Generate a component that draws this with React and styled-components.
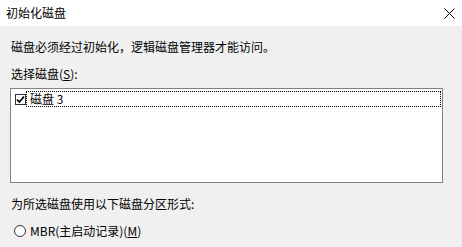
import styled, { createGlobalStyle } from 'styled-components'

const GlobalStyle = createGlobalStyle`
  html, body {
    margin: 0;
    padding: 0;
    background: #f0f0f0;
  }
  body {
    font-family: "Noto Sans CJK SC", "Noto Sans", sans-serif;
    font-size: 12px;
    color: #000;
  }
`

const App = () => {
  return (
    <>
      <GlobalStyle />
      <Dialog>
        <TitleBar>
          <Title>初始化磁盘</Title>
          <CloseButton>
            <svg width="11" height="11" viewBox="0 0 11 11">
              <path d="M0.5 0.5 L10.5 10.5 M10.5 0.5 L0.5 10.5" stroke="#000" strokeWidth="1" />
            </svg>
          </CloseButton>
        </TitleBar>
        <Body>
          <Text>磁盘必须经过初始化，逻辑磁盘管理器才能访问。</Text>
          <Label>
            选择磁盘(<u>S</u>):
          </Label>
          <ListBox>
            <ListRow>
              <CheckBox>
                <svg width="9" height="9" viewBox="0 0 9 9">
                  <path d="M1 4.5 L3.4 7 L8 1.5" stroke="#000" strokeWidth="1.8" fill="none" />
                </svg>
              </CheckBox>
              <Focus>磁盘 3</Focus>
            </ListRow>
          </ListBox>
          <SectionText>为所选磁盘使用以下磁盘分区形式:</SectionText>
          <RadioRow>
            <Radio />
            <span>
              MBR(主启动记录)(<u>M</u>)
            </span>
          </RadioRow>
        </Body>
      </Dialog>
    </>
  )
}

export default App

const Dialog = styled.div`
  width: 462px;
  height: 247px;
  overflow: hidden;
  background: #f0f0f0;
`

const TitleBar = styled.div`
  height: 26px;
  background: #fff;
  display: flex;
  align-items: center;
  justify-content: space-between;
  padding: 0 7px 0 6px;
`

const Title = styled.span`
  font-size: 12px;
  line-height: 16px;
`

const CloseButton = styled.div`
  width: 11px;
  height: 11px;
  display: flex;
  svg {
    display: block;
  }
`

const Body = styled.div`
  padding: 13px 0 0 10px;
  display: flex;
  flex-direction: column;
`

const Text = styled.div`
  line-height: 16px;
  padding-left: 1px;
`

const Label = styled.div`
  line-height: 16px;
  margin-top: 11px;
  padding-left: 1px;
`

const ListBox = styled.div`
  margin-top: 6px;
  width: 433px;
  height: 95px;
  border: 1px solid #828282;
  background: #fff;
  padding: 2px 0 0 0;
  box-sizing: border-box;
`

const ListRow = styled.div`
  display: flex;
  align-items: center;
  height: 16px;
  padding-left: 4px;
`

const CheckBox = styled.div`
  width: 11px;
  height: 11px;
  box-sizing: border-box;
  border: 1px solid #333;
  background: #fff;
  display: flex;
  align-items: center;
  justify-content: center;
`

const Focus = styled.div`
  flex: 1;
  height: 16px;
  margin-left: 0;
  margin-right: 1px;
  box-sizing: border-box;
  border: 1px dotted #000;
  line-height: 14px;
  padding-left: 3px;
`

const SectionText = styled.div`
  line-height: 16px;
  margin-top: 13px;
  padding-left: 1px;
`

const RadioRow = styled.div`
  margin-top: 11px;
  display: flex;
  align-items: center;
  line-height: 16px;
  padding-left: 4px;
  gap: 4px;
`

const Radio = styled.div`
  width: 12px;
  height: 12px;
  box-sizing: border-box;
  border: 1px solid #333;
  border-radius: 50%;
  background: #fff;
`
